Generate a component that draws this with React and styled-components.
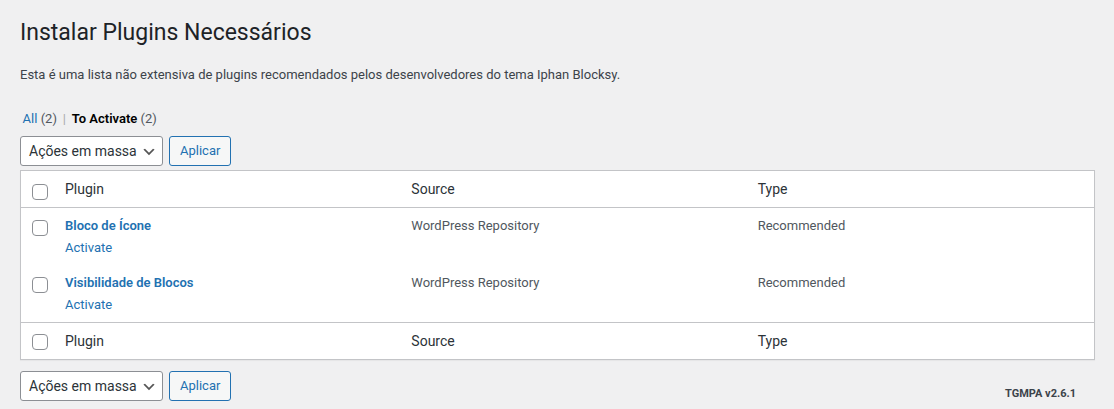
import React from "react";
import styled, { createGlobalStyle } from "styled-components";

const GlobalStyle = createGlobalStyle`
  html, body {
    margin: 0;
    padding: 0;
    background: #f0f0f1;
  }
  body {
    font-family: Roboto, "Noto Sans", "Liberation Sans", sans-serif;
    font-size: 13px;
    color: #3c434a;
  }
  * { box-sizing: border-box; }
`;

const Wrap = styled.div`
  display: flex;
  flex-direction: column;
  padding: 0 19px 0 20px;
`;

const Title = styled.h1`
  margin: 0;
  padding: 18px 0 4px;
  font-size: 23px;
  font-weight: 400;
  line-height: 30px;
  color: #1d2327;
`;

const Description = styled.p`
  margin: 13px 0;
  font-size: 13px;
  line-height: 19.5px;
  color: #3c434a;
`;

const Filters = styled.div`
  margin-top: 8.5px;
  font-size: 13px;
  line-height: 26px;
  height: 26px;
  color: #646970;
  white-space: pre;
`;

const FilterLink = styled.a`
  padding: 0 0.2em;
  text-decoration: none;
  color: ${(p) => (p.$current ? "#000" : "#2271b1")};
  font-weight: ${(p) => (p.$current ? 600 : 400)};
`;

const Count = styled.span`
  color: #50575e;
  font-weight: 400;
`;

const Sep = styled.span`
  color: #a7aaad;
`;

const TableNav = styled.div`
  display: flex;
  align-items: flex-end;
  margin-top: ${(p) => p.$top}px;
`;

const SelectBox = styled.div`
  display: flex;
  align-items: center;
  justify-content: space-between;
  width: 143px;
  height: 30px;
  padding: 0 5px 0 8px;
  margin-right: 6px;
  border: 1px solid #8c8f94;
  border-radius: 3px;
  background: #fff;
  font-size: 14px;
  color: #2c3338;
  svg {
    margin-top: 1px;
    flex: none;
  }
`;

const Button = styled.button`
  height: 30px;
  padding: 0 10px;
  border: 1px solid #2271b1;
  border-radius: 3px;
  background: #f6f7f7;
  color: #2271b1;
  font-family: inherit;
  font-size: 13px;
  line-height: 28px;
  cursor: pointer;
`;

const Version = styled.div`
  margin-left: auto;
  margin-right: 19px;
  font-size: 11px;
  font-weight: 700;
  line-height: 14px;
  color: #3c434a;
`;

const Table = styled.div`
  margin-top: 4px;
  background: #fff;
  border: 1px solid #c3c4c7;
  box-shadow: 0 1px 1px rgba(0, 0, 0, 0.04);
`;

const Row = styled.div`
  display: grid;
  grid-template-columns: 34px repeat(3, 1fr);
  border-bottom: ${(p) => (p.$head ? "1px solid #c3c4c7" : "none")};
  border-top: ${(p) => (p.$foot ? "1px solid #c3c4c7" : "none")};
`;

const HeadCell = styled.div`
  padding: 8px 10px;
  font-size: 14px;
  line-height: 20px;
  color: #2c3338;
`;

const Cell = styled.div`
  padding: 8px 10px;
  font-size: 13px;
  line-height: 19.5px;
  color: #50575e;
`;

const CheckCell = styled.div`
  padding: 0;
`;

const Checkbox = styled.input.attrs({ type: "checkbox" })`
  appearance: none;
  -webkit-appearance: none;
  display: block;
  width: 16px;
  height: 16px;
  margin: ${(p) => p.$top}px 0 0 11px;
  border: 1px solid #8c8f94;
  border-radius: 4px;
  background: #fff;
`;

const PluginName = styled.a`
  font-weight: 600;
  color: #2271b1;
  text-decoration: none;
`;

const RowActions = styled.div`
  padding-top: 2px;
  line-height: 19.5px;
  a {
    color: #2271b1;
    text-decoration: none;
  }
`;

const Chevron = () => (
  <svg width="16" height="16" viewBox="0 0 20 20">
    <path d="M5 6l5 5 5-5 2 1-7 7-7-7 2-1z" fill="#555" />
  </svg>
);

const BulkActions = () => (
  <>
    <SelectBox>
      <span>Ações em massa</span>
      <Chevron />
    </SelectBox>
    <Button>Aplicar</Button>
  </>
);

const plugins = [
  { name: "Bloco de Ícone", source: "WordPress Repository", type: "Recommended" },
  { name: "Visibilidade de Blocos", source: "WordPress Repository", type: "Recommended" },
];

const HeaderRow = ({ foot, top }) => (
  <Row $head={!foot} $foot={foot}>
    <CheckCell>
      <Checkbox $top={top} />
    </CheckCell>
    <HeadCell>Plugin</HeadCell>
    <HeadCell>Source</HeadCell>
    <HeadCell>Type</HeadCell>
  </Row>
);

export default function App() {
  return (
    <>
      <GlobalStyle />
      <Wrap>
        <Title>Instalar Plugins Necessários</Title>
        <Description>
          Esta é uma lista não extensiva de plugins recomendados pelos desenvolvedores do tema Iphan Blocksy.
        </Description>
        <Filters>
          <FilterLink href="#">
            All <Count>(2)</Count>
          </FilterLink>{" "}
          <Sep>|</Sep>{" "}
          <FilterLink href="#" $current>
            To Activate <Count>(2)</Count>
          </FilterLink>
        </Filters>
        <TableNav $top={4}>
          <BulkActions />
        </TableNav>
        <Table>
          <HeaderRow top={13} />
          {plugins.map((p) => (
            <Row key={p.name}>
              <CheckCell>
                <Checkbox $top={12} />
              </CheckCell>
              <Cell>
                <PluginName href="#">{p.name}</PluginName>
                <RowActions>
                  <a href="#">Activate</a>
                </RowActions>
              </Cell>
              <Cell>{p.source}</Cell>
              <Cell>{p.type}</Cell>
            </Row>
          ))}
          <HeaderRow foot top={11} />
        </Table>
        <TableNav $top={11}>
          <BulkActions />
          <Version>TGMPA v2.6.1</Version>
        </TableNav>
      </Wrap>
    </>
  );
}
